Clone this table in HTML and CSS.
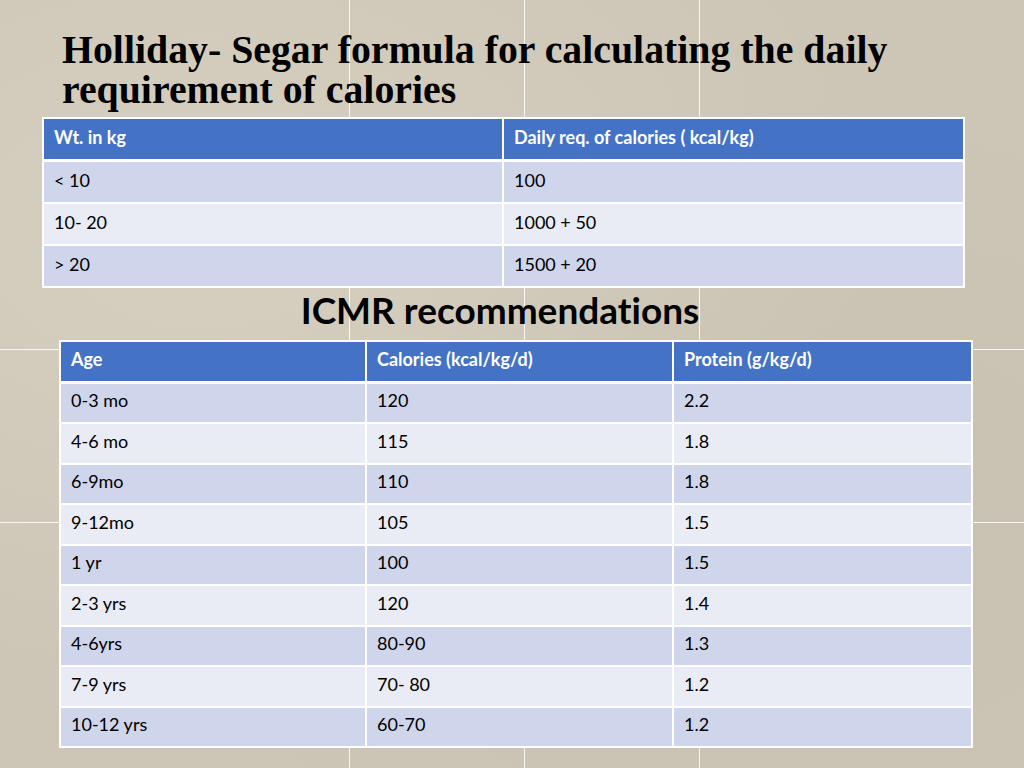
FILE: index.html
```html
<!DOCTYPE html>
<html lang="en">
<head>
<meta charset="utf-8">
<title>Holliday-Segar formula</title>
<link rel="stylesheet" href="styles.css">
</head>
<body>
<main class="slide">
  <h1 class="title">Holliday- Segar formula for calculating the daily requirement of calories</h1>
  <table class="grid grid-hs">
    <thead>
      <tr><th>Wt. in kg</th><th>Daily req. of calories ( kcal/kg)</th></tr>
    </thead>
    <tbody>
      <tr><td>&lt; 10</td><td>100</td></tr>
      <tr><td>10- 20</td><td>1000 + 50</td></tr>
      <tr><td>&gt; 20</td><td>1500 + 20</td></tr>
    </tbody>
  </table>
  <h2 class="subtitle">ICMR recommendations</h2>
  <table class="grid grid-icmr">
    <thead>
      <tr><th>Age</th><th>Calories (kcal/kg/d)</th><th>Protein (g/kg/d)</th></tr>
    </thead>
    <tbody>
      <tr><td>0-3 mo</td><td>120</td><td>2.2</td></tr>
      <tr><td>4-6 mo</td><td>115</td><td>1.8</td></tr>
      <tr><td>6-9mo</td><td>110</td><td>1.8</td></tr>
      <tr><td>9-12mo</td><td>105</td><td>1.5</td></tr>
      <tr><td>1 yr</td><td>100</td><td>1.5</td></tr>
      <tr><td>2-3 yrs</td><td>120</td><td>1.4</td></tr>
      <tr><td>4-6yrs</td><td>80-90</td><td>1.3</td></tr>
      <tr><td>7-9 yrs</td><td>70- 80</td><td>1.2</td></tr>
      <tr><td>10-12 yrs</td><td>60-70</td><td>1.2</td></tr>
    </tbody>
  </table>
</main>
</body>
</html>
```
FILE: styles.css
```css
html, body {
  margin: 0;
  padding: 0;
}
body {
  width: 1024px;
  height: 768px;
  overflow: hidden;
  background-color: #cdc6b6;
  background-image:
    linear-gradient(to right, transparent 349px, rgba(255,255,255,0.85) 349px, rgba(255,255,255,0.85) 350px, transparent 350px,
      transparent 524px, rgba(255,255,255,0.85) 524px, rgba(255,255,255,0.85) 525px, transparent 525px,
      transparent 699px, rgba(255,255,255,0.85) 699px, rgba(255,255,255,0.85) 700px, transparent 700px),
    linear-gradient(to bottom, transparent 349px, rgba(255,255,255,0.85) 349px, rgba(255,255,255,0.85) 350px, transparent 350px,
      transparent 522px, rgba(255,255,255,0.85) 522px, rgba(255,255,255,0.85) 523px, transparent 523px),
    radial-gradient(ellipse at 20% 30%, rgba(220,214,200,0.6), transparent 60%),
    radial-gradient(ellipse at 80% 70%, rgba(196,188,172,0.5), transparent 60%);
  font-family: Lato, "Liberation Sans", sans-serif;
  color: #000;
}
.slide {
  display: flex;
  flex-direction: column;
  align-items: flex-start;
  padding-top: 30px;
}
.title {
  margin: 0 0 0 62px;
  width: 920px;
  font-family: "Liberation Serif", "Times New Roman", serif;
  font-weight: bold;
  font-size: 39.8px;
  line-height: 40px;
}
.grid {
  border-collapse: collapse;
  table-layout: fixed;
  font-size: 18px;
  font-variant-ligatures: none;
}
.grid th, .grid td {
  border: 2px solid #fff;
  text-align: left;
  padding: 0 10px 5px 10px;
  white-space: nowrap;
}
.grid th {
  background: #4472c4;
  color: #fff;
  font-weight: bold;
  border-bottom-width: 3px;
}
.grid tbody tr:nth-child(odd) td { background: #cfd5ea; }
.grid tbody tr:nth-child(even) td { background: #e9ebf5; }
.grid-hs {
  margin: 7px 0 0 42px;
  width: 923px;
}
.grid-hs th, .grid-hs td { height: 35px; }
.grid-hs th:first-child, .grid-hs td:first-child { width: 438px; }
.grid-icmr {
  margin: 0 0 0 59px;
  width: 914px;
}
.grid-icmr th, .grid-icmr td {
  height: 33.5px;
}
.grid-icmr th:nth-child(1), .grid-icmr td:nth-child(1) { width: 284px; }
.grid-icmr th:nth-child(2), .grid-icmr td:nth-child(2) { width: 285px; }
.subtitle {
  align-self: stretch;
  margin: 0 24px 8px 0;
  text-align: center;
  font-family: Lato, "Liberation Sans", sans-serif;
  font-weight: bold;
  font-size: 37px;
  line-height: 44px;
  font-variant-ligatures: none;
}
```
